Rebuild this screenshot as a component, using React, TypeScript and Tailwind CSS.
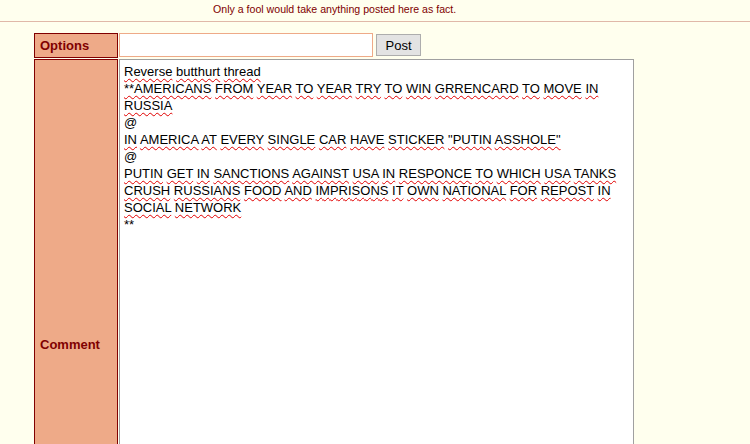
const lines = [
  "Reverse butthurt thread",
  "**AMERICANS FROM YEAR TO YEAR TRY TO WIN GRRENCARD TO MOVE IN",
  "RUSSIA",
  "@",
  'IN AMERICA AT EVERY SINGLE CAR HAVE STICKER "PUTIN ASSHOLE"',
  "@",
  "PUTIN GET IN SANCTIONS AGAINST USA IN RESPONCE TO WHICH USA TANKS",
  "CRUSH RUSSIANS FOOD AND IMPRISONS IT OWN NATIONAL FOR REPOST IN",
  "SOCIAL NETWORK",
  "**",
];

// words the spellchecker flags
function Line({ text }: { text: string }) {
  const words = text.split(" ");
  return (
    <div className="whitespace-pre">
      {words.map((w, i) => {
        const flagged = /[A-Za-z]/.test(w);
        return (
          <span key={i}>
            {i > 0 && " "}
            <span
              className={
                flagged
                  ? "underline decoration-wavy decoration-[#e00000] decoration-1 underline-offset-[2px]"
                  : ""
              }
            >
              {w}
            </span>
          </span>
        );
      })}
    </div>
  );
}

export default function App() {
  return (
    <div className="h-screen overflow-hidden bg-[#ffffee] font-['Liberation_Sans',Arial,sans-serif]">
      <div className="h-[22px] border-b border-[#e0b8a8] pl-[213px] pt-[3px] text-[10.6px] leading-[12px] text-[#800000]">
        Only a fool would take anything posted here as fact.
      </div>
      <div className="pl-[34px] pt-[11px] flex flex-col gap-px">
        <div className="flex gap-px">
          <div className="w-[84px] h-[25px] bg-[#eeaa88] border border-[#800000] px-[5px] flex items-center text-[13px] font-bold text-[#800000]">
            Options
          </div>
          <div className="flex items-start gap-[3px]">
            <div className="w-[254px] h-[24px] bg-white border border-[#eeaa88]" />
            <button className="mt-px w-[45px] h-[22px] bg-[#e3e3e3] border border-[#adadad] text-[13px] text-black leading-none">
              Post
            </button>
          </div>
        </div>
        <div className="flex gap-px">
          <div className="w-[84px] h-[572px] bg-[#eeaa88] border border-[#800000] px-[5px] flex items-center text-[13px] font-bold text-[#800000]">
            Comment
          </div>
          <div className="w-[515px] h-[572px] bg-white border border-[#a0a0a0] pl-[4px] pt-[3px] text-[13px] leading-[17px] text-black">
            {lines.map((l, i) => (
              <Line key={i} text={l} />
            ))}
          </div>
        </div>
      </div>
    </div>
  );
}
